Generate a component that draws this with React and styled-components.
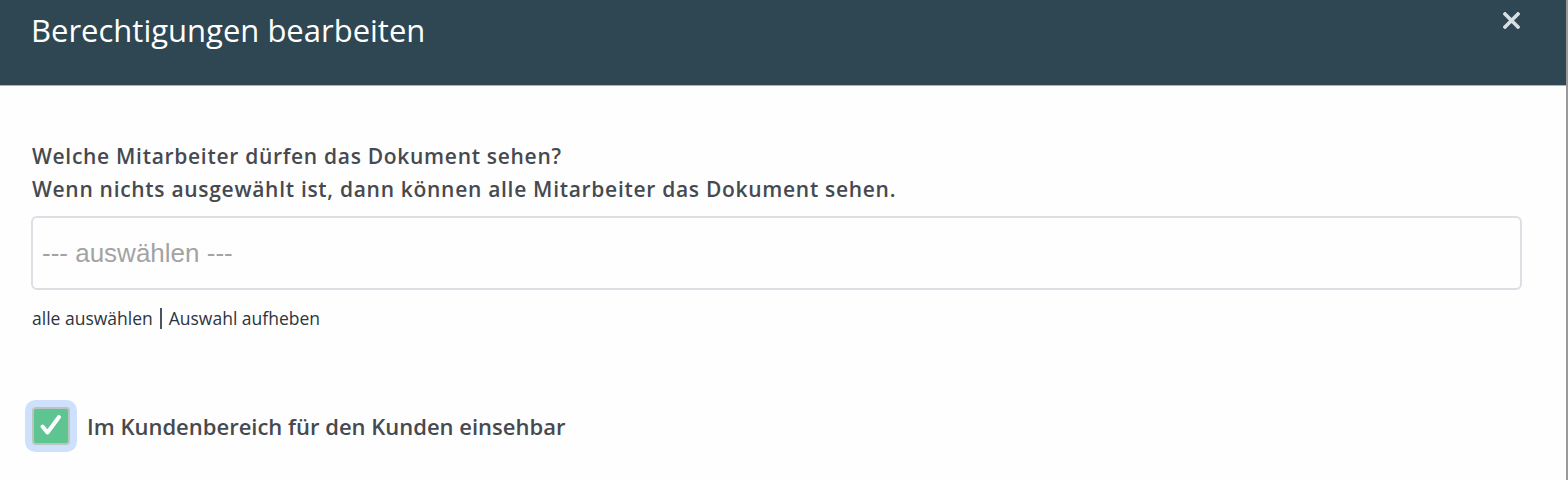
import React from "react";
import styled, { createGlobalStyle } from "styled-components";

const Global = createGlobalStyle`
  html, body { margin: 0; padding: 0; background: #ffffff; }
  body { font-family: "Open Sans", "Noto Sans", sans-serif; }
`;

const Modal = styled.div`
  width: 1566px;
  height: 480px;
  border-right: 2px solid #9a9a9a;
  background: #fefefe;
  overflow: hidden;
`;

const Header = styled.header`
  height: 86px;
  box-sizing: border-box;
  background: #2f4653;
  border-bottom: 1px solid #a9b3b8;
  display: flex;
  justify-content: space-between;
  align-items: flex-start;
  padding: 11px 46px 0 31px;
`;

const Title = styled.h2`
  margin: 0;
  font-family: "Open Sans", "Noto Sans", sans-serif;
  font-weight: 400;
  font-size: 31px;
  line-height: 38px;
  color: #ffffff;
`;

const CloseButton = styled.button`
  border: 0;
  background: transparent;
  padding: 0;
  margin-top: 1px;
  width: 17px;
  height: 17px;
  color: #d9dfe2;
  cursor: pointer;
  display: flex;
`;

const Body = styled.div`
  padding: 54px 44px 0 32px;
`;

const Description = styled.p`
  margin: 0;
  font-size: 21px;
  line-height: 33px;
  letter-spacing: 0.7px;
  color: #464a50;
  font-weight: 600;
`;

const SelectBox = styled.div`
  margin-top: 10px;
  height: 74px;
  box-sizing: border-box;
  border: 2px solid #dcdfe4;
  border-radius: 6px;
  display: flex;
  align-items: center;
  padding-left: 9px;
  font-family: "Liberation Sans", Arial, sans-serif;
  font-size: 26px;
  color: #a3a3a3;
  margin-left: -1px;
`;

const LinkRow = styled.div`
  margin-top: 16px;
  display: flex;
  align-items: center;
  gap: 7px;
  font-size: 17.5px;
  line-height: 24px;
  color: #2b3540;
`;

const TextLink = styled.a`
  color: inherit;
  text-decoration: none;
  cursor: pointer;
`;

const Divider = styled.span`
  width: 2px;
  height: 21px;
  background: #4b5360;
`;

const CheckRow = styled.label`
  margin-top: 77px;
  display: flex;
  align-items: center;
  gap: 17px;
  font-size: 22px;
  color: #464a50;
  font-weight: 600;
  cursor: pointer;
`;

const CheckBox = styled.span`
  width: 38px;
  height: 38px;
  box-sizing: border-box;
  border: 2px solid #b8c6bd;
  border-radius: 4px;
  background: #5ec592;
  box-shadow: 0 0 0 7px #cfe0fc;
  display: flex;
  align-items: center;
  justify-content: center;
`;

export default function App() {
  return (
    <>
      <Global />
      <Modal>
        <Header>
          <Title>Berechtigungen bearbeiten</Title>
          <CloseButton aria-label="Schließen">
            <svg width="17" height="17" viewBox="0 0 17 17">
              <path
                d="M2 2 L15 15 M15 2 L2 15"
                stroke="currentColor"
                strokeWidth="3.6"
                strokeLinecap="square"
              />
            </svg>
          </CloseButton>
        </Header>
        <Body>
          <Description>
            Welche Mitarbeiter dürfen das Dokument sehen?
            <br />
            Wenn nichts ausgewählt ist, dann können alle Mitarbeiter das Dokument sehen.
          </Description>
          <SelectBox>--- auswählen ---</SelectBox>
          <LinkRow>
            <TextLink>alle auswählen</TextLink>
            <Divider />
            <TextLink>Auswahl aufheben</TextLink>
          </LinkRow>
          <CheckRow>
            <CheckBox>
              <svg width="34" height="34" viewBox="0 0 34 34">
                <path
                  d="M8.5 17.5 L13.5 23.5 L25 8"
                  fill="none"
                  stroke="#ffffff"
                  strokeWidth="4"
                  strokeLinecap="round"
                  strokeLinejoin="round"
                />
              </svg>
            </CheckBox>
            Im Kundenbereich für den Kunden einsehbar
          </CheckRow>
        </Body>
      </Modal>
    </>
  );
}
